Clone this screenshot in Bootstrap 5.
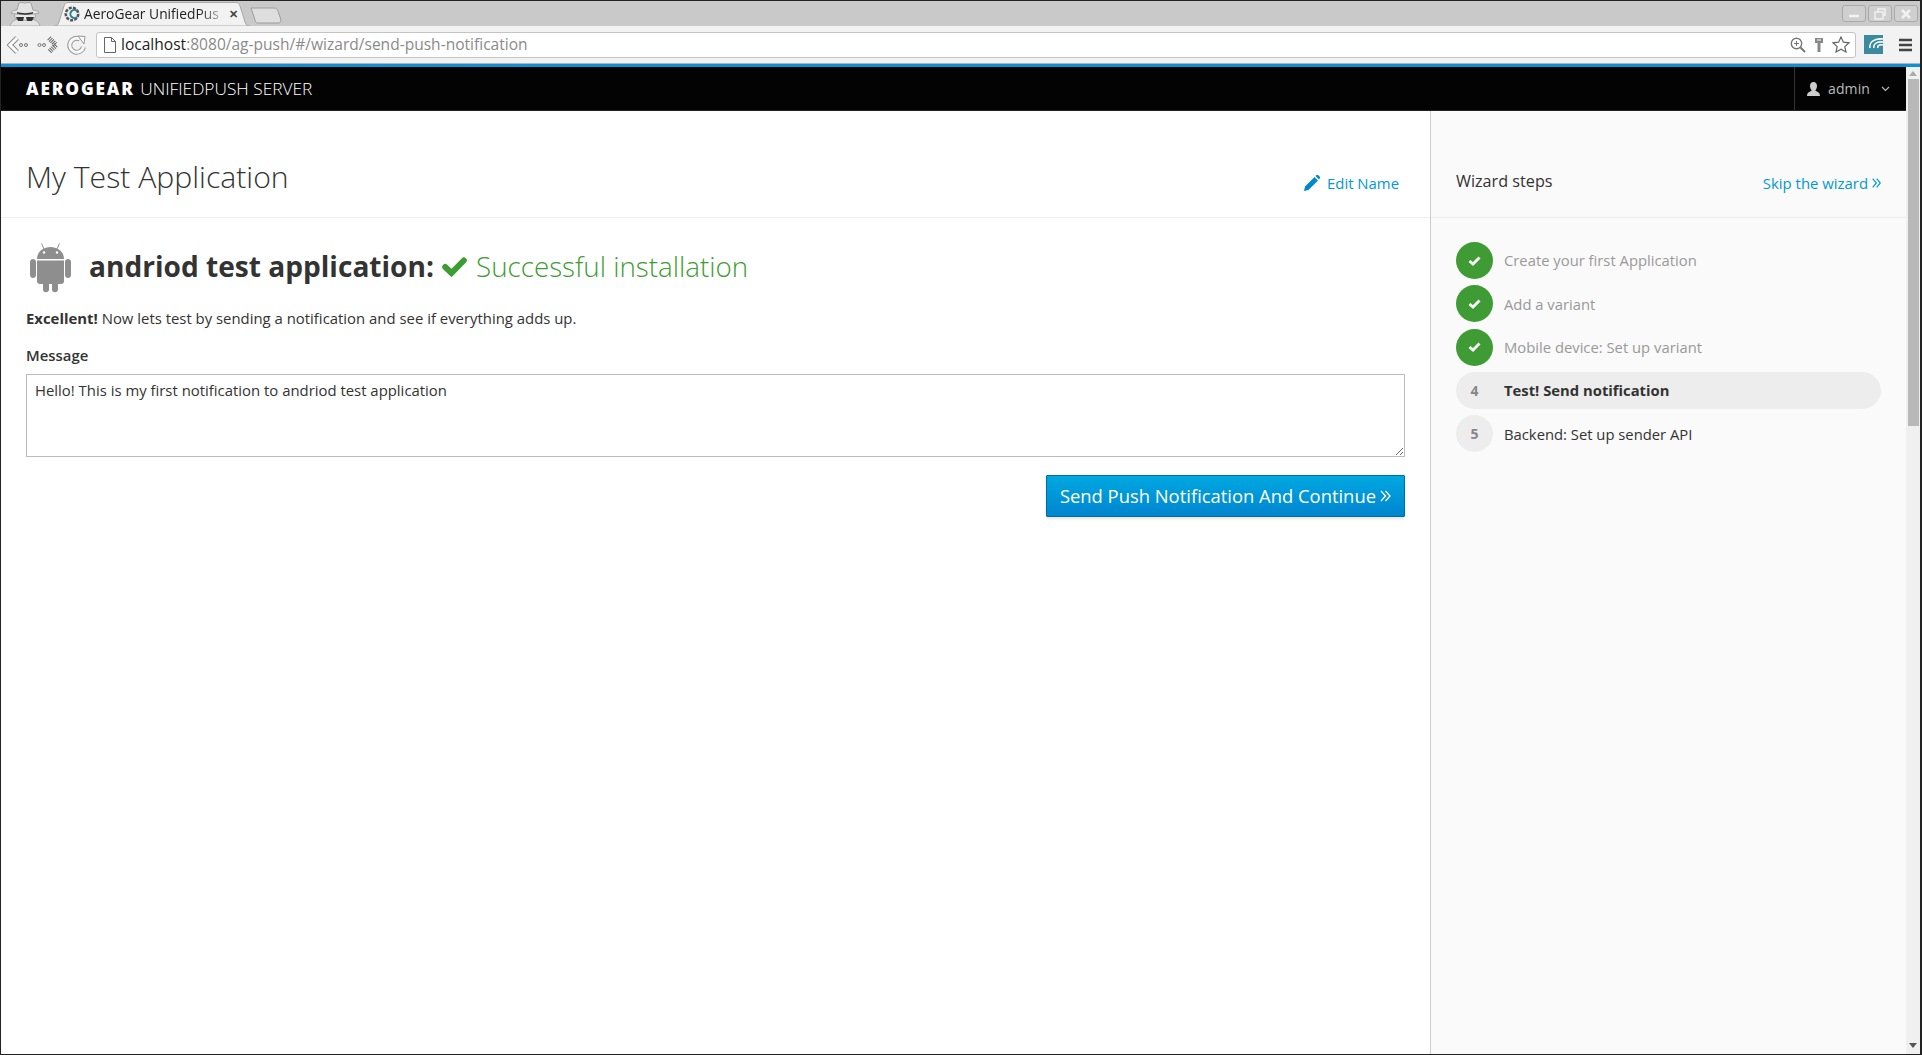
<!DOCTYPE html>
<html lang="en">
  <head>
    <meta charset="UTF-8" />
    <meta name="viewport" content="width=device-width, initial-scale=1.0" />
    <title>AeroGear UnifiedPush Server</title>
    <link
      rel="stylesheet"
      href="https://cdn.jsdelivr.net/npm/bootstrap@5.3.0/dist/css/bootstrap.min.css"
    />
    <style>
      html,
      body {
        height: 100%;
        overflow: hidden;
      }
      body {
        font-family: "Open Sans", "Liberation Sans", sans-serif;
        font-size: 14.9px;
        color: #333;
        background: #fff;
      }
      .win-frame {
        height: 1055px;
        border: 1px solid #222;
        border-right-width: 2px;
        overflow: hidden;
      }
      .title-bar {
        height: 25px;
        background: #c9c9c9;
        padding-left: 6px;
      }
      .spy-icon {
        width: 36px;
        height: 25px;
        margin-right: 11px;
      }
      .tab-shape {
        display: grid;
        width: 196px;
        height: 24px;
        margin-top: 1px;
      }
      .tab-shape > * {
        grid-area: 1 / 1;
      }
      .tab-inner {
        padding: 0 12px 0 10px;
        font-size: 13.8px;
        color: #222;
      }
      .tab-text {
        margin-left: 4px;
        white-space: nowrap;
        -webkit-mask-image: linear-gradient(90deg, #000 85%, rgba(0, 0, 0, 0.35));
        mask-image: linear-gradient(90deg, #000 85%, rgba(0, 0, 0, 0.35));
      }
      .tab-close {
        font-size: 11px;
        font-weight: 700;
        margin-left: auto;
        color: #444;
      }
      .new-tab {
        width: 32px;
        height: 17px;
        margin-top: 6px;
      }
      .win-btn {
        width: 24px;
        height: 17px;
        border: 1px solid #aaa;
        border-radius: 3px;
        background: #cfcfcf;
      }
      .win-btns {
        gap: 2px;
        padding-right: 2px;
      }
      .tool-bar {
        height: 37px;
        background: #f2f2f2;
        padding: 5px 8px 5px 6px;
      }
      .url-box {
        height: 26px;
        background: #fff;
        border: 1px solid #c4c4c4;
        border-radius: 3px;
        margin-left: 9px;
        padding: 0 5px 0 7px;
        font-size: 15.55px;
        color: #8a8a8a;
      }
      .page-glyph {
        margin-right: 5px;
      }
      .url-host {
        color: #222;
      }
      .blue-line {
        height: 4px;
        background: #0f90d2;
        border-top: 1px solid #b4b4b4;
      }
      .page-row {
        min-height: 0;
      }
      .top-nav {
        height: 44px;
        background: #030303;
        padding: 0;
        border-bottom: 1px solid #222;
      }
      .brand-text {
        margin-left: 25px;
        font-size: 17.3px;
        color: #fff;
        font-weight: 300;
        white-space: nowrap;
      }
      .brand-text b {
        font-weight: 800;
        letter-spacing: 1.85px;
        margin-right: 1px;
      }
      .user-menu {
        height: 100%;
        border-left: 1px solid #333;
        padding: 0 16px 0 12px;
        color: #bbb;
        font-size: 14px;
        letter-spacing: 0.1px;
      }
      .user-caret {
        margin-left: 11px;
      }
      .scroll-track {
        width: 14px;
        background: #f0f0f0;
      }
      .scroll-thumb {
        width: 11px;
        height: 347px;
        margin: 3px 0 0 2px;
        background: #b8b8b8;
      }
      .arrow-up {
        width: 0;
        height: 0;
        margin: 4px auto 0;
        border: 4px solid transparent;
        border-top: 0;
        border-bottom: 5px solid #aaa;
      }
      .arrow-down {
        width: 0;
        height: 0;
        margin: auto auto 6px;
        border: 4px solid transparent;
        border-bottom: 0;
        border-top: 5px solid #555;
      }
      .main-pane {
        width: 1429px;
        flex: none;
      }
      .side-pane {
        background: #fafafa;
        border-left: 1px solid #ccc;
      }
      .pane-head {
        height: 107px;
        border-bottom: 1px solid #ededed;
      }
      .main-head {
        padding: 0 25px;
      }
      .app-title {
        font-size: 30.2px;
        font-weight: 300;
        margin: 0 0 24px;
        color: #333;
        line-height: 1.1;
      }
      .blue-link {
        color: #0099d3;
        text-decoration: none;
        font-size: 14.9px;
      }
      .edit-link {
        margin: 0 6px 23px 0;
      }
      .pencil-icon {
        margin-right: 7px;
      }
      .main-body {
        padding: 25px 25px 0;
      }
      .app-heading {
        font-size: 28.1px;
        font-weight: 700;
        margin: 0;
        height: 50px;
        padding-bottom: 2px;
        white-space: nowrap;
      }
      .ok-text {
        color: #3f9c35;
        font-weight: 300;
        font-size: 27.75px;
      }
      .droid-icon {
        width: 41px;
        height: 50px;
        margin: 0 18px 0 4px;
      }
      .check-big {
        width: 25px;
        height: 20px;
        margin: 0 9px 0 8px;
      }
      .lead-line {
        margin: 15px 0 0;
        line-height: 20px;
      }
      .msg-label {
        font-weight: 600;
        margin: 17px 0 0;
        line-height: 20px;
      }
      .msg-input {
        height: 83px;
        margin-top: 9px;
        border: 1px solid #bbb;
        border-radius: 0;
        padding: 4px 8px;
        font-size: 14.9px;
        color: #333;
        box-shadow: none;
      }
      .send-btn {
        height: 42px;
        margin-top: 18px;
        padding: 0 13px;
        font-size: 18.4px;
        color: #fff;
        background: linear-gradient(#00a8e1, #0085cf);
        border: 1px solid #006e9c;
        border-radius: 1px;
        box-shadow: 0 2px 3px rgba(3, 3, 3, 0.1);
        white-space: nowrap;
      }
      .side-head {
        padding: 0 25px;
      }
      .wizard-title {
        font-size: 16.2px;
        font-weight: 400;
        margin: 0 0 26px;
        color: #333;
      }
      .skip-link {
        margin-bottom: 23px;
      }
      .step-list {
        padding: 24px 25px 0;
        width: 100%;
      }
      .step-item {
        height: 37px;
        margin-bottom: 6.3px;
        color: #333;
        font-size: 14.8px;
        border-radius: 19px;
      }
      .step-done {
        color: #999;
      }
      .step-now {
        background: #ededed;
        font-weight: 700;
      }
      .step-dot {
        width: 37px;
        height: 37px;
        border-radius: 50%;
        margin-right: 11px;
        flex: none;
        font-weight: 700;
        font-size: 14px;
        color: #888;
      }
      .step-ok {
        background: #3f9c35;
      }
      .step-num {
        background: #ededed;
      }
    </style>
  </head>
  <body>
    <div class="win-frame d-flex flex-column">
      <div class="title-bar d-flex flex-shrink-0">
        <svg class="spy-icon" viewBox="0 0 36 25">
          <path d="M3 25 C4 20 10 17 18 17 C26 17 32 20 33 25Z" fill="#e4e4e4" stroke="#a8a8a8" />
          <path d="M8 17 C7 14 8 12 10 11 H26 C28 12 29 14 28 17 C24 20 12 20 8 17Z" fill="#e8e8e8" stroke="#a8a8a8" />
          <path d="M4 12 C4 10 8 9 10 9 L12 2 C14 .5 16 2 18 2 C20 2 22 .5 24 2 L26 9 C28 9 32 10 32 12 C26 14 10 14 4 12Z" fill="#e4e4e4" stroke="#a0a0a0" />
          <path d="M10 11 C14 12.500 22 12.500 26 11 L26 12.500 C22 14 14 14 10 12.500Z" fill="#333" />
          <path d="M9 16 H17 L16 20 H11Z M19 16 H27 L25 20 H20Z" fill="#333" />
        </svg>
        <div class="tab-shape">
          <svg width="196" height="24" viewBox="0 0 196 24">
            <path d="M0 24 C3 24 4 23 5 20 L10 4 C11 1 12 .5 14 .5 H182 C184 .5 185 1 186 4 L191 20 C192 23 193 24 196 24Z" fill="#f2f2f2" stroke="#a8a8a8" />
          </svg>
          <div class="tab-inner d-flex align-items-center">
            <svg width="16" height="16" viewBox="0 0 16 16" class="flex-shrink-0">
              <circle cx="8" cy="8" r="6.200" fill="none" stroke="#555" stroke-width="2.600" stroke-dasharray="3 1.200" />
              <path d="M13 5 A4 4 0 1 0 13 11" fill="none" stroke="#2a7f93" stroke-width="2" />
            </svg>
            <span class="tab-text">AeroGear UnifiedPus</span>
            <span class="tab-close">✕</span>
          </div>
        </div>
        <svg class="new-tab" viewBox="0 0 32 17">
          <path d="M1 1 H24 C26 1 27 2 28 4 L31 13 C31 15 30 16 28 16 H8 C6 16 5 15 5 13Z" fill="#dedede" stroke="#9c9c9c" />
        </svg>
        <div class="win-btns d-flex ms-auto pt-1">
          <div class="win-btn d-flex align-items-center justify-content-center">
            <svg width="12" height="12" viewBox="0 0 12 12"><path d="M1 8 H11" stroke="#f2f2f2" stroke-width="2.500" /></svg>
          </div>
          <div class="win-btn d-flex align-items-center justify-content-center">
            <svg width="12" height="12" viewBox="0 0 12 12"><path d="M4 1 H11 V7 H9 V4 H4Z M1 4 H9 V11 H1Z" fill="none" stroke="#f2f2f2" stroke-width="1.400" /></svg>
          </div>
          <div class="win-btn d-flex align-items-center justify-content-center">
            <svg width="12" height="12" viewBox="0 0 12 12"><path d="M2 2 L10 10 M10 2 L2 10" stroke="#f2f2f2" stroke-width="2.500" /></svg>
          </div>
        </div>
      </div>

      <div class="tool-bar d-flex align-items-center flex-shrink-0">
        <svg width="22" height="20" viewBox="0 0 22 20" class="flex-shrink-0">
          <path d="M10 3 L3 10 L10 17" fill="none" stroke="#888" stroke-width="5" />
          <path d="M10 3 L3 10 L10 17" fill="none" stroke="#fff" stroke-width="3" />
          <circle cx="14" cy="10" r="1.500" fill="none" stroke="#777" />
          <circle cx="19" cy="10" r="1.500" fill="none" stroke="#777" />
        </svg>
        <svg width="22" height="20" viewBox="0 0 22 20" class="flex-shrink-0 ms-2">
          <circle cx="2.500" cy="10" r="1.500" fill="none" stroke="#777" />
          <circle cx="7" cy="10" r="1.500" fill="none" stroke="#777" />
          <path d="M12 3 L19 10 L12 17" fill="none" stroke="#666" stroke-width="5" stroke-dasharray="1 1" />
        </svg>
        <svg width="20" height="20" viewBox="0 0 20 20" class="flex-shrink-0 ms-2">
          <path d="M16.500 12 A7 7 0 1 1 13 4" fill="none" stroke="#999" stroke-width="5" />
          <path d="M16.500 12 A7 7 0 1 1 13 4" fill="none" stroke="#f8f8f8" stroke-width="3" />
          <path d="M11 1 L18 1.500 L17 9Z" fill="#f8f8f8" stroke="#999" />
        </svg>
        <div class="url-box d-flex align-items-center flex-grow-1">
          <svg width="12" height="16" viewBox="0 0 12 16" class="flex-shrink-0 page-glyph">
            <path d="M.5 .5 H7.500 L11.500 4.500 V15.500 H.5Z M7.500 .5 V4.500 H11.500" fill="#fff" stroke="#666" />
          </svg>
          <span><span class="url-host">localhost</span>:8080/ag-push/#/wizard/send-push-notification</span>
          <svg width="16" height="16" viewBox="0 0 16 16" class="ms-auto flex-shrink-0">
            <circle cx="6.500" cy="6.500" r="5.200" fill="none" stroke="#777" stroke-width="1.400" />
            <path d="M10.500 10.500 L15 15" stroke="#777" stroke-width="2" />
            <path d="M4 6.500 H9 M6.500 4 V9" stroke="#777" />
          </svg>
          <svg width="10" height="16" viewBox="0 0 10 16" class="ms-2 flex-shrink-0">
            <path d="M1 1 H9 V6 H6.500 V15 H3.500 V6 H1Z" fill="#888" />
            <path d="M3 3 H7" stroke="#fff" />
          </svg>
          <svg width="18" height="17" viewBox="0 0 18 17" class="ms-2 flex-shrink-0">
            <path d="M9 1 L11.400 6.200 L17 6.800 L12.800 10.600 L14 16 L9 13.200 L4 16 L5.200 10.600 L1 6.800 L6.600 6.200Z" fill="#fff" stroke="#666" stroke-width="1.200" />
          </svg>
        </div>
        <svg width="19" height="19" viewBox="0 0 19 19" class="flex-shrink-0 ms-2">
          <rect width="19" height="19" fill="#3a8aa0" />
          <path d="M19 4 C9 3 5 8 6 13 M19 7 C12 6 9 10 10 13 M19 10 C15 9 13 11 14 13" fill="none" stroke="#fff" stroke-width="1.600" />
        </svg>
        <svg width="13" height="14" viewBox="0 0 13 14" class="flex-shrink-0 ms-3">
          <path d="M0 2 H13 M0 7 H13 M0 12 H13" stroke="#444" stroke-width="2.400" />
        </svg>
      </div>
      <div class="blue-line flex-shrink-0"></div>

      <div class="page-row d-flex flex-grow-1">
        <div class="d-flex flex-column flex-grow-1">
          <nav class="navbar top-nav d-flex flex-nowrap justify-content-between flex-shrink-0">
            <span class="brand-text"><b>AEROGEAR</b> UNIFIEDPUSH SERVER</span>
            <div class="user-menu d-flex align-items-center">
              <svg width="13" height="14" viewBox="0 0 13 14" class="me-2">
                <path d="M6.500 0 C9 0 10 2 10 4 C10 6 9 7.500 8.200 8.500 C9.500 9.500 13 10 13 14 H0 C0 10 3.500 9.500 4.800 8.500 C4 7.500 3 6 3 4 C3 2 4 0 6.500 0Z" fill="#ccc" />
              </svg>
              <span>admin</span>
              <svg width="9" height="6" viewBox="0 0 9 6" class="user-caret">
                <path d="M1 1 L4.500 4.500 L8 1" fill="none" stroke="#bbb" stroke-width="1.200" />
              </svg>
            </div>
          </nav>
          <div class="d-flex flex-grow-1">
            <div class="main-pane">
              <div class="pane-head main-head d-flex justify-content-between align-items-end">
                <h1 class="app-title">My Test Application</h1>
                <a class="blue-link edit-link d-flex align-items-center" href="#">
                  <svg width="16" height="16" viewBox="0 0 16 16" class="pencil-icon">
                    <path d="M0 16 L1 11.500 L10.500 2 L14 5.500 L4.500 15Z M11.500 1 L12.500 0 C13 -.3 13.500 -.3 14 0 L15.800 1.800 C16.200 2.300 16.200 2.800 15.800 3.300 L15 4.500Z" fill="#0088ce" />
                  </svg>
                  Edit Name
                </a>
              </div>
              <div class="main-body">
                <div class="d-flex align-items-center">
                  <svg class="droid-icon" viewBox="0 0 41 50">
                    <path d="M7 16 C7 9 13 4 20.500 4 C28 4 34 9 34 16Z" fill="#8e8e8e" />
                    <path d="M7 17.500 H34 V38 C34 40 33 41 31 41 H28 V46.500 C28 50 22 50 22 46.500 V41 H19 V46.500 C19 50 13 50 13 46.500 V41 H10 C8 41 7 40 7 38Z" fill="#8e8e8e" />
                    <path d="M0 19 C0 15 6 15 6 19 V32 C6 36 0 36 0 32Z M35 19 C35 15 41 15 41 19 V32 C41 36 35 36 35 32Z" fill="#8e8e8e" />
                    <path d="M14 6 L11.500 .5 M27 6 L29.500 .5" stroke="#8e8e8e" />
                    <circle cx="14" cy="9.500" r="1.200" fill="#fff" />
                    <circle cx="27" cy="9.500" r="1.200" fill="#fff" />
                  </svg>
                  <h2 class="app-heading d-flex align-items-center">
                    andriod test application:
                    <svg class="check-big" viewBox="0 0 25 20">
                      <path d="M3.200 10 L9.500 16 L21.800 3.500" fill="none" stroke="#3f9c35" stroke-width="6" stroke-linecap="round" />
                    </svg>
                    <span class="ok-text">Successful installation</span>
                  </h2>
                </div>
                <p class="lead-line"><b>Excellent!</b> Now lets test by sending a notification and see if everything adds up.</p>
                <form>
                  <label class="msg-label d-block" for="pushMessage">Message</label>
                  <textarea class="form-control msg-input" id="pushMessage">Hello! This is my first notification to andriod test application</textarea>
                  <div class="d-flex justify-content-end">
                    <button type="button" class="btn send-btn d-flex align-items-center">
                      Send Push Notification And Continue
                      <svg width="11" height="12" viewBox="0 0 11 12" class="ms-1">
                        <path d="M1 1 L5.500 6 L1 11 M5.500 1 L10 6 L5.500 11" fill="none" stroke="#fff" stroke-width="1.300" />
                      </svg>
                    </button>
                  </div>
                </form>
              </div>
            </div>
            <div class="side-pane flex-grow-1">
              <div class="pane-head side-head d-flex justify-content-between align-items-end">
                <h3 class="wizard-title">Wizard steps</h3>
                <a class="blue-link skip-link d-flex align-items-center" href="#">
                  Skip the wizard
                  <svg width="9" height="10" viewBox="0 0 9 10" class="ms-1">
                    <path d="M.7 .7 L4.300 5 L.7 9.300 M4.700 .7 L8.300 5 L4.700 9.300" fill="none" stroke="#0099d3" stroke-width="1.200" />
                  </svg>
                </a>
              </div>
              <div class="step-list">
                <div class="step-item step-done d-flex align-items-center">
                  <span class="step-dot step-ok d-flex align-items-center justify-content-center">
                    <svg width="13" height="10" viewBox="0 0 13 10"><path d="M1.500 5 L5 8 L11.500 1.500" fill="none" stroke="#fff" stroke-width="2.800" /></svg>
                  </span>
                  Create your first Application
                </div>
                <div class="step-item step-done d-flex align-items-center">
                  <span class="step-dot step-ok d-flex align-items-center justify-content-center">
                    <svg width="13" height="10" viewBox="0 0 13 10"><path d="M1.500 5 L5 8 L11.500 1.500" fill="none" stroke="#fff" stroke-width="2.800" /></svg>
                  </span>
                  Add a variant
                </div>
                <div class="step-item step-done d-flex align-items-center">
                  <span class="step-dot step-ok d-flex align-items-center justify-content-center">
                    <svg width="13" height="10" viewBox="0 0 13 10"><path d="M1.500 5 L5 8 L11.500 1.500" fill="none" stroke="#fff" stroke-width="2.800" /></svg>
                  </span>
                  Mobile device: Set up variant
                </div>
                <div class="step-item step-now d-flex align-items-center">
                  <span class="step-dot d-flex align-items-center justify-content-center">4</span>
                  Test! Send notification
                </div>
                <div class="step-item d-flex align-items-center">
                  <span class="step-dot step-num d-flex align-items-center justify-content-center">5</span>
                  Backend: Set up sender API
                </div>
              </div>
            </div>
          </div>
        </div>
        <div class="scroll-track d-flex flex-column flex-shrink-0">
          <div class="arrow-up"></div>
          <div class="scroll-thumb"></div>
          <div class="arrow-down"></div>
        </div>
      </div>
    </div>
    <script src="https://cdn.jsdelivr.net/npm/bootstrap@5.3.0/dist/js/bootstrap.bundle.min.js"></script>
  </body>
</html>
